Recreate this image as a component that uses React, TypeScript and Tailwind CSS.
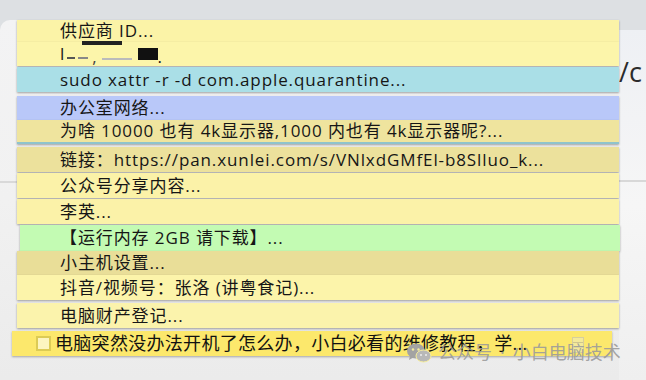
import React from 'react';

type Note = {
  text: string;
  box: string; // position + size + colour, written out in full
  pad: string;
};

const notes: Note[] = [
  { text: '供应商 ID...', box: 'mt-[20px] ml-[17px] w-[602px] h-[22px] bg-[#fbf3a7]', pad: 'pl-[43px]' },
  { text: '', box: 'ml-[17px] w-[602px] h-[24px] bg-[#fcf5aa]', pad: 'pl-[43px]' },
  { text: 'sudo xattr -r -d com.apple.quarantine...', box: 'mt-[1px] ml-[17px] w-[602px] h-[25px] bg-[#aadfe7]', pad: 'pl-[43px]' },
  { text: '办公室网络...', box: 'mt-[4px] ml-[17px] w-[602px] h-[24px] bg-[#b9c8f9]', pad: 'pl-[43px]' },
  { text: '为啥 10000 也有 4k显示器,1000 内也有 4k显示器呢?...', box: 'ml-[17px] w-[602px] h-[24px] bg-[#efe49e] border-b-2 border-[#8fc3cc]', pad: 'pl-[43px]' },
  { text: '链接：https://pan.xunlei.com/s/VNlxdGMfEl-b8Slluo_k...', box: 'mt-[3px] ml-[17px] w-[602px] h-[25px] bg-[#ece19c]', pad: 'pl-[43px]' },
  { text: '公众号分享内容...', box: 'mt-[1px] ml-[17px] w-[602px] h-[25px] bg-[#fbf2a8]', pad: 'pl-[43px]' },
  { text: '李英...', box: 'mt-[1px] ml-[17px] w-[602px] h-[25px] bg-[#fbf2a8]', pad: 'pl-[43px]' },
  { text: '【运行内存 2GB 请下载】...', box: 'mt-[1px] ml-[20px] w-[600px] h-[26px] bg-[#c3fbb3]', pad: 'pl-[40px]' },
  { text: '小主机设置...', box: 'ml-[17px] w-[602px] h-[24px] bg-[#e9de98]', pad: 'pl-[43px]' },
  { text: '抖音/视频号：张洛 (讲粤食记)...', box: 'ml-[17px] w-[602px] h-[25px] bg-[#fcf4aa]', pad: 'pl-[43px]' },
  { text: '电脑财产登记...', box: 'mt-[3px] ml-[17px] w-[602px] h-[25px] bg-[#fbf3ac]', pad: 'pl-[43px]' },
];

const font = { fontFamily: '"Open Sans", "Noto Sans CJK SC", sans-serif' };

const WeChatMark: React.FC = () => (
  <svg width="26" height="22" viewBox="0 0 26 22" className="shrink-0">
    <ellipse cx="10" cy="9" rx="9" ry="7.5" fill="#a3a3a3" />
    <path d="M4 14 L3 18 L8 15 Z" fill="#a3a3a3" />
    <ellipse cx="17.5" cy="14" rx="7.5" ry="6" fill="#b8b8b8" stroke="#f7ee9c" strokeWidth="1" />
    <circle cx="7" cy="7.5" r="1.2" fill="#f5eea0" />
    <circle cx="12.5" cy="7.5" r="1.2" fill="#f5eea0" />
    <circle cx="15" cy="13" r="1" fill="#eee" />
    <circle cx="20" cy="13" r="1" fill="#eee" />
  </svg>
);

const App: React.FC = () => {
  return (
    <div className="relative w-[646px] h-[380px] overflow-hidden bg-[#dde0e3]" style={font}>
      {/* windows behind the notes */}
      <div className="absolute left-0 top-[20px] w-[619px] h-[360px] rounded-tl-[10px] bg-gradient-to-b from-[#f3f3f4] via-[#f1f1f1] to-[#ebebeb]">
        <div className="mt-[161px] w-[17px] h-[2px] bg-[#d9d9d9]" />
      </div>
      <div className="absolute left-[619px] top-[30px] w-[27px] h-[350px] bg-gradient-to-b from-[#eef0f4] via-[#f6f6f6] to-[#efefef]">
        <div className="pt-[27px] text-[27px] leading-[30px] text-[#2b2b2b]">/c</div>
        <div className="mt-[93px] w-full h-[2px] bg-[#d8d8d8]" />
      </div>

      {/* stickies */}
      <div className="relative flex flex-col">
        {notes.map((n, i) => (
          <div
            key={i}
            className={`${n.box} ${n.pad} flex items-center shrink-0 text-[17px] tracking-[0.9px] text-[#161616] shadow-[0_1px_2px_rgba(0,0,0,0.35)] whitespace-nowrap`}
          >
            {i === 1 ? (
              <div className="relative flex items-center h-full">
                <span>l</span>
                <span className="ml-[2px] mt-[8px] w-[8px] h-[2px] bg-[#555]" />
                <span className="ml-[3px] mt-[8px] w-[10px] h-[2px] bg-[#888]" />
                <span className="ml-[4px] mt-[6px] text-[#444]">,</span>
                <span className="ml-[4px] mt-[10px] w-[30px] h-[2px] bg-[#bbb]" />
                <span className="ml-[6px] w-[20px] h-[12px] bg-[#111]" />
                <span className="mt-[6px]">.</span>
                <span className="absolute left-[22px] top-[-1px] w-[40px] h-[4px] bg-[#222] blur-[0.5px]" />
              </div>
            ) : (
              n.text
            )}
          </div>
        ))}
        <div className="mt-[3px] ml-[12px] w-[600px] h-[25px] shrink-0 flex items-center bg-[#fce86c] shadow-[0_1px_2px_rgba(0,0,0,0.3)] whitespace-nowrap">
          <div className="ml-[24px] w-[15px] h-[15px] bg-[#fcf5c0] border-2 border-[#dccb55]" />
          <span className="ml-[4px] text-[18px] tracking-[0.3px] text-[#111]">电脑突然没办法开机了怎么办，小白必看的维修教程，学...</span>
        </div>
      </div>

      {/* collapse handle + watermark */}
      <div className="absolute left-[572px] top-[337px] w-[12px] h-[16px] border border-[#d7cf9c] bg-[#f4ea9a]">
        <div className="mt-[4px] h-[1px] bg-[#cfc58e]" />
      </div>
      <div className="absolute left-[406px] top-[339px] flex items-center gap-[6px] text-[18px] text-[#9a9a9a]/90">
        <WeChatMark />
        <span>公众号</span>
        <span className="mx-[2px]">·</span>
        <span>小白电脑技术</span>
      </div>
    </div>
  );
};

export default App;
